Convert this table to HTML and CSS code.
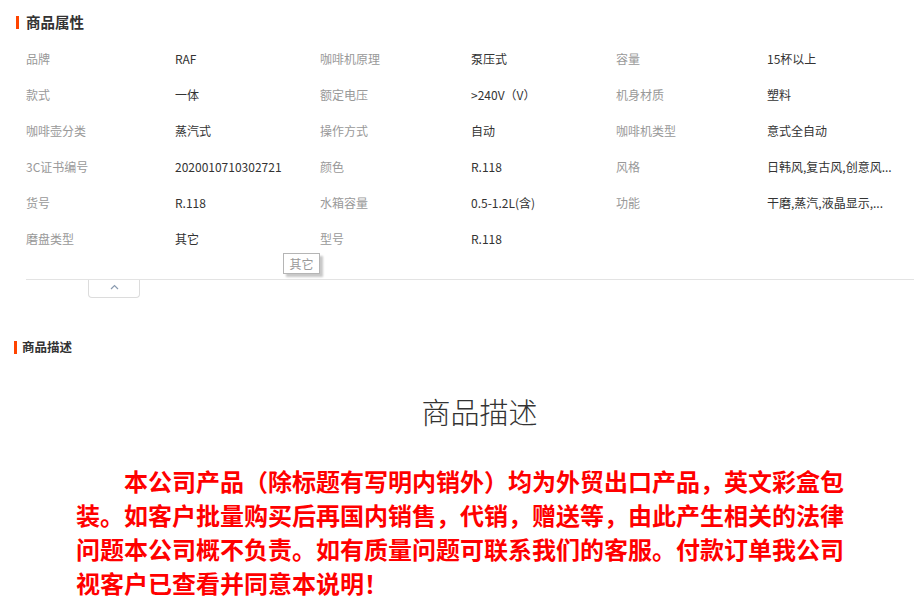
FILE: index.html
```html
<!DOCTYPE html>
<html lang="zh-CN">
<head>
<meta charset="utf-8">
<title>商品属性</title>
<link rel="stylesheet" href="styles.css">
</head>
<body>
<div class="page">
  <section class="attrs">
    <h2 class="sec-title sec-title-lg">商品属性</h2>
    <div class="attr-wrap">
      <dl class="attr-grid">
        <dt>品牌</dt><dd>RAF</dd>
        <dt>咖啡机原理</dt><dd>泵压式</dd>
        <dt>容量</dt><dd>15杯以上</dd>
        <dt>款式</dt><dd>一体</dd>
        <dt>额定电压</dt><dd>&gt;240V（V）</dd>
        <dt>机身材质</dt><dd>塑料</dd>
        <dt>咖啡壶分类</dt><dd>蒸汽式</dd>
        <dt>操作方式</dt><dd>自动</dd>
        <dt>咖啡机类型</dt><dd>意式全自动</dd>
        <dt>3C证书编号</dt><dd>2020010710302721</dd>
        <dt>颜色</dt><dd>R.118</dd>
        <dt>风格</dt><dd>日韩风,复古风,创意风...</dd>
        <dt>货号</dt><dd>R.118</dd>
        <dt>水箱容量</dt><dd>0.5-1.2L(含)</dd>
        <dt>功能</dt><dd>干磨,蒸汽,液晶显示,...</dd>
        <dt>磨盘类型</dt><dd>其它</dd>
        <dt>型号</dt><dd>R.118</dd>
      </dl>
      <div class="tooltip">其它</div>
    </div>
    <div class="fold">
      <div class="fold-line"></div>
      <button class="fold-tab" type="button" aria-label="收起">
        <svg width="9" height="6" viewBox="0 0 9 6"><path d="M1 5 L4.5 1.5 L8 5" fill="none" stroke="#8a9bb0" stroke-width="1.2"/></svg>
      </button>
    </div>
  </section>
  <section class="desc">
    <h2 class="sec-title sec-title-sm">商品描述</h2>
    <div class="desc-body">
      <p class="desc-heading">商品描述</p>
      <p class="notice">本公司产品（除标题有写明内销外）均为外贸出口产品，英文彩盒包装。如客户批量购买后再国内销售，代销，赠送等，由此产生相关的法律问题本公司概不负责。如有质量问题可联系我们的客服。付款订单我公司视客户已查看并同意本说明！</p>
    </div>
  </section>
</div>
</body>
</html>
```
FILE: styles.css
```css
html, body {
  margin: 0;
  padding: 0;
  background: #fff;
  overflow: hidden;
}
body {
  font-family: "Noto Sans CJK SC", "Liberation Sans", sans-serif;
  color: #333;
}
.page {
  width: 921px;
}
.sec-title {
  margin: 0;
  font-weight: bold;
  color: #333;
  line-height: 20px;
  position: relative;
}
.sec-title::before {
  content: "";
  position: absolute;
  top: 4px;
  width: 3px;
  height: 13px;
  background: #ff4400;
}
.sec-title-lg {
  margin-top: 12px;
  margin-bottom: 8px;
  padding-left: 26px;
  font-size: 14.5px;
}
.sec-title-lg::before {
  left: 16px;
}
.sec-title-sm {
  margin-top: 39px;
  padding-left: 22px;
  font-size: 12.5px;
}
.sec-title-sm::before {
  left: 14px;
}
.attr-wrap {
  position: relative;
}
.attr-grid {
  margin: 0;
  padding: 0 0 0 26px;
  display: grid;
  grid-template-columns: 149px 145px 151px 145px 151px 1fr;
  grid-auto-rows: 36px;
  font-size: 12px;
}
.attr-grid dt,
.attr-grid dd {
  margin: 0;
  display: flex;
  align-items: center;
  white-space: nowrap;
}
.attr-grid dt {
  color: #999;
}
.attr-grid dd {
  color: #333;
}
.tooltip {
  position: absolute;
  left: 283px;
  top: 213px;
  width: 35px;
  height: 19px;
  border: 1px solid #b5b5b5;
  background: #fff;
  box-shadow: 3px 3px 2px #c8c8c8;
  color: #999;
  font-size: 12px;
  line-height: 19px;
  text-align: center;
}
.fold {
  margin-top: 23px;
  padding-left: 26px;
}
.fold-line {
  width: 888px;
  height: 1px;
  background: #e3e3e3;
}
.fold-tab {
  display: flex;
  align-items: flex-start;
  justify-content: center;
  margin-left: 62px;
  width: 52px;
  height: 18px;
  padding: 4px 0 0;
  border: 1px solid #dcdcdc;
  border-top: 0;
  border-radius: 0 0 4px 4px;
  background: #fff;
}
.desc-body {
  padding-left: 76px;
}
.desc-heading {
  box-sizing: border-box;
  margin: 34px 0 0;
  padding-left: 39px;
  width: 768px;
  text-align: center;
  font-family: "Noto Sans CJK SC", serif;
  font-weight: 300;
  font-size: 29px;
  line-height: 40px;
  color: #333;
}
.notice {
  margin: 33px 0 0;
  width: 768px;
  text-indent: 48px;
  font-size: 24px;
  line-height: 34px;
  font-weight: bold;
  color: #ff0000;
  word-break: break-all;
}
```
